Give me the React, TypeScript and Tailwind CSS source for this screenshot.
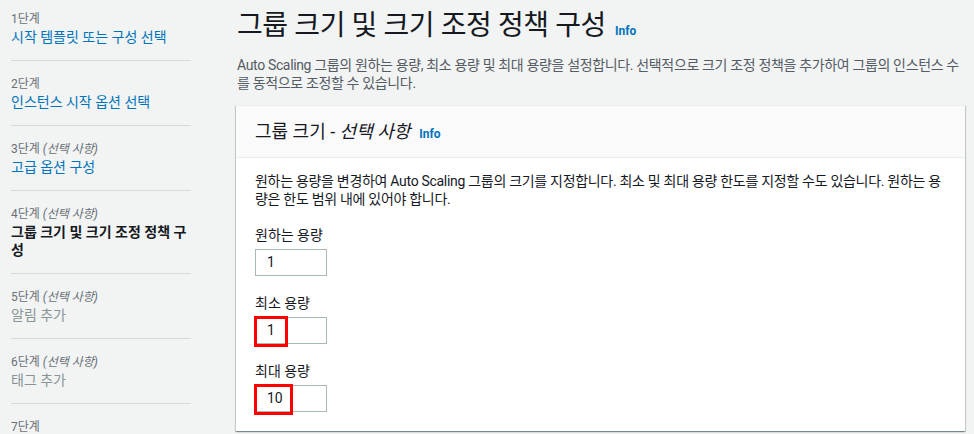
import React from "react";

const steps = [
  { step: "1단계", optional: false, title: "시작 템플릿 또는 구성 선택", state: "link" },
  { step: "2단계", optional: false, title: "인스턴스 시작 옵션 선택", state: "link" },
  { step: "3단계", optional: true, title: "고급 옵션 구성", state: "link" },
  { step: "4단계", optional: true, title: "그룹 크기 및 크기 조정 정책 구성", state: "active" },
  { step: "5단계", optional: true, title: "알림 추가", state: "disabled" },
  { step: "6단계", optional: true, title: "태그 추가", state: "disabled" },
  { step: "7단계", optional: false, title: "검토", state: "disabled" },
];

function Info() {
  return <span className="text-[12px] font-bold text-[#0073bb] ml-[9px]">Info</span>;
}

function Field({ label, value, marker }: { label: string; value: string; marker?: number }) {
  return (
    <div className="mt-[18px]">
      <div className="text-[14px] leading-[18px] text-[#16191f]">{label}</div>
      <div className="relative mt-[5px] w-[72px] h-[27px] border border-[#aab7b8] bg-white pl-[11px] text-[14px] leading-[25px] text-[#16191f]">
        {value}
        {marker ? (
          <div
            className={`absolute -left-[2px] -top-[2px] h-[31px] border-[3px] border-[#ff0000] ${
              marker === 1 ? "w-[34px]" : "w-[39px]"
            }`}
          />
        ) : null}
      </div>
    </div>
  );
}

export default function App() {
  return (
    <div className="min-h-screen bg-[#f2f3f3] flex font-['Roboto','Noto_Sans_CJK_KR',sans-serif] overflow-hidden h-[434px]">
      <nav className="w-[191px] shrink-0 pl-[11px] -mt-[4px]">
        {steps.map((s) => (
          <div key={s.step} className="py-[14px] border-b border-[#d5dbdb]">
            <div className="text-[12px] leading-[18px] text-[#687078]">
              {s.step}
              {s.optional && <i> (선택 사항)</i>}
            </div>
            <div
              className={`text-[14px] leading-[18px] ${
                s.state === "link"
                  ? "text-[#0073bb]"
                  : s.state === "active"
                  ? "text-[#16191f] font-bold"
                  : "text-[#879596]"
              }`}
            >
              {s.title}
            </div>
          </div>
        ))}
      </nav>

      <main className="ml-[45px] w-[729px] shrink-0 pt-[8px]">
        <div className="flex items-baseline pl-[1px]">
          <h1 className="text-[28px] leading-[36px] tracking-[-0.4px] text-[#16191f]">그룹 크기 및 크기 조정 정책 구성</h1>
          <Info />
        </div>
        <p className="mt-[12px] pl-[1px] text-[14px] leading-[18px] tracking-[-0.35px] text-[#545b64]">
          Auto Scaling 그룹의 원하는 용량, 최소 용량 및 최대 용량을 설정합니다. 선택적으로 크기 조정 정책을 추가하여 그룹의 인스턴스 수를 동적으로 조정할 수 있습니다.
        </p>

        <section className="mt-[13px] bg-white border-t border-[#eaeded] shadow-[0_1px_1px_0_rgba(0,28,36,0.3),1px_1px_1px_0_rgba(0,28,36,0.15),-1px_1px_1px_0_rgba(0,28,36,0.15)]">
          <div className="bg-[#fafafa] border-b border-[#eaeded] px-[19px] pt-[14px] pb-[13px] flex items-baseline">
            <h2 className="text-[18px] leading-[24px] text-[#16191f]">
              그룹 크기 - <i>선택 사항</i>
            </h2>
            <Info />
          </div>
          <div className="px-[19px] pt-[14px] pb-[19px]">
            <p className="text-[14px] leading-[18px] tracking-[-0.3px] text-[#16191f]">
              원하는 용량을 변경하여 Auto Scaling 그룹의 크기를 지정합니다. 최소 및 최대 용량 한도를 지정할 수도 있습니다. 원하는 용량은 한도 범위 내에 있어야 합니다.
            </p>
            <Field label="원하는 용량" value="1" />
            <Field label="최소 용량" value="1" marker={1} />
            <Field label="최대 용량" value="10" marker={2} />
          </div>
        </section>
      </main>
    </div>
  );
}
